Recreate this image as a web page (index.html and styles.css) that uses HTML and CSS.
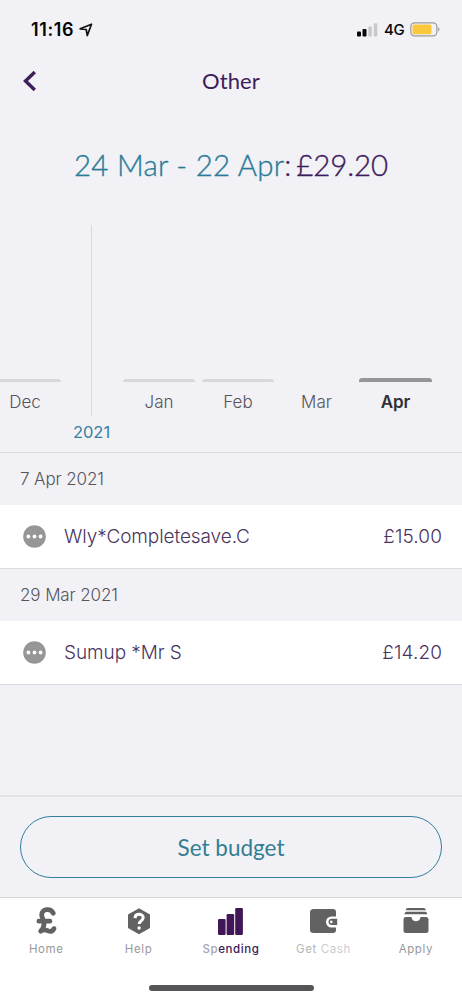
FILE: index.html
```html
<!DOCTYPE html>
<html lang="en">
<head>
<meta charset="utf-8">
<meta name="viewport" content="width=device-width, initial-scale=1">
<title>Other</title>
<link rel="stylesheet" href="styles.css">
</head>
<body>
<div class="app">
  <div class="status">
    <span class="clock">11:16</span>
    <svg class="locate" width="14" height="14" viewBox="0 0 14 14"><path d="M1.200 5.800 12.500 1.200 8.300 12.500 7.200 6.500z"/></svg>
    <svg class="signal" width="21" height="14" viewBox="0 0 21 14"><rect x="0" y="8.500" width="4" height="5" rx="1"/><rect x="5.500" y="6" width="4" height="7.500" rx="1"/><rect class="off" x="11.300" y="3.500" width="3.500" height="10" rx="1"/><rect class="off" x="16.800" y="0.300" width="3.500" height="13.200" rx="1"/></svg>
    <span class="network">4G</span>
    <svg class="battery" width="31" height="15" viewBox="0 0 31 15"><rect class="shell" x=".8" y=".8" width="26" height="13" rx="3.600"/><rect class="charge" x="2.500" y="2.400" width="19" height="9.800" rx="1.800"/><path class="tip" d="M28.200 5v4.600q2.600-2.300 0-4.600z"/></svg>
  </div>
  <header class="nav">
    <svg class="back" width="14" height="20" viewBox="0 0 14 20"><path d="M11.800 1 2.500 10l9.300 9"/></svg>
    <h1 class="title">Other</h1>
  </header>
  <h2 class="summary"><span class="period">24 Mar - 22 Apr</span><span class="total">: <span class="amount">£29.20</span></span></h2>
  <section class="chart">
    <div class="month dec"><i class="bar"></i><span>Dec</span></div>
    <div class="year"><i class="rule"></i><span>2021</span></div>
    <div class="month"><i class="bar"></i><span>Jan</span></div>
    <div class="month"><i class="bar"></i><span>Feb</span></div>
    <div class="month"><i class="bar none"></i><span>Mar</span></div>
    <div class="month current"><i class="bar"></i><span>Apr</span></div>
  </section>
  <main class="list">
    <h3 class="date">7 Apr 2021</h3>
    <div class="row">
      <svg class="dots" width="24" height="24" viewBox="0 0 24 24"><circle cx="12.500" cy="11.500" r="11.300"/><g><circle cx="6.400" cy="11.500" r="1.900"/><circle cx="12.500" cy="11.500" r="1.900"/><circle cx="18.600" cy="11.500" r="1.900"/></g></svg>
      <span class="payee">Wly*Completesave.C</span><span class="price">£15.00</span>
    </div>
    <h3 class="date">29 Mar 2021</h3>
    <div class="row">
      <svg class="dots" width="24" height="24" viewBox="0 0 24 24"><circle cx="12.500" cy="11.500" r="11.300"/><g><circle cx="6.400" cy="11.500" r="1.900"/><circle cx="12.500" cy="11.500" r="1.900"/><circle cx="18.600" cy="11.500" r="1.900"/></g></svg>
      <span class="payee">Sumup *Mr S</span><span class="price">£14.20</span>
    </div>
  </main>
  <div class="action"><button class="budget">Set budget</button></div>
  <nav class="tabs">
    <div class="tab"><svg width="34" height="34" viewBox="0 0 34 34"><path class="pound" d="M24.200 9.200C22 3.800 12.500 4.500 12.700 11c.1 3 2.300 5 2.300 9 0 3-1.400 5.200-3.300 7.200 3.200-2.700 5.400-1.200 7.800-.2 2.600.9 4.600-.2 5.400-2.400M9.900 17.200h11"/></svg><span>Home</span></div>
    <div class="tab"><svg width="34" height="34" viewBox="0 0 34 34"><path class="hex" d="M17 4.300 28 10.500v13.500l-11 6.200-11-6.200V10.500z"/><path class="ask" d="M13 14.100c.1-5.100 8.200-4.900 8.200-.5 0 3.300-4 3.200-4 6.300"/><circle class="askdot" cx="17.100" cy="24" r="1.700"/></svg><span>Help</span></div>
    <div class="tab active"><svg width="34" height="34" viewBox="0 0 34 34"><rect x="4" y="15" width="7.600" height="16" rx="1.200"/><rect x="12.600" y="10" width="7.600" height="21" rx="1.200"/><rect x="21.200" y="4" width="7.700" height="27" rx="1.200"/></svg><span><i class="faded">Sp</i>ending</span></div>
    <div class="tab cash"><svg width="34" height="34" viewBox="0 0 34 34"><path d="M7.500 5H27Q30 5 30 8v4.500h-4.500a5.500 5.500 0 0 0 0 11H30V26Q30 29 27 29H7.500Q4 29 4 26V8.500Q4 5 7.500 5z"/><path d="M25.700 14.700H31.200v6.300h-5.500a3.150 3.150 0 0 1 0-6.300z"/><circle class="clasp" cx="25.300" cy="17.900" r="1.300"/></svg><span>Get <i>Cash</i></span></div>
    <div class="tab apply"><svg width="34" height="34" viewBox="0 0 34 34"><path d="M9 4h15.500q2 0 2.500 2.200H6.600Q7 4 9 4zM7.300 7.800h19.200q1.400 0 1.800 2.500h-23q.5-2.500 2-2.500zM7 13h5.500c.4 5.800 8.600 5.800 9 0H27q2.500 0 2.500 2.500v11Q29.500 29 27 29H7q-2.500 0-2.500-2.500v-11Q4.500 13 7 13z"/></svg><span>Apply</span></div>
  </nav>
  <div class="home"><i></i></div>
</div>
</body>
</html>
```
FILE: styles.css
```css
* { box-sizing: border-box; }
body { margin: 0; background: #f1f1f6; font-family: Inter, "Liberation Sans", sans-serif; color: #56555b; }
h1, h2, h3 { margin: 0; font-weight: 400; }
i { font-style: normal; }
svg { display: block; flex: none; }
.app { width: 462px; height: 1000px; display: flex; flex-direction: column; overflow: hidden; }
.app > * { flex: none; }

.status { height: 57px; padding: 2px 21px 0 31px; display: flex; align-items: center; color: #050507; }
.clock { width: 48px; font-size: 18px; font-weight: 600; letter-spacing: .6px; white-space: nowrap; }
.locate { fill: none; stroke: #111; stroke-width: 1.7; stroke-linejoin: round; }
.signal { margin-left: auto; margin-right: 6px; fill: #080808; }
.signal .off { fill: #c9c9cc; }
.network { width: 26px; font-size: 15px; font-weight: 500; letter-spacing: -.3px; }
.battery .shell { fill: none; stroke: #9c9ca0; stroke-width: 1.2; }
.battery .charge { fill: #fac83a; }
.battery .tip { fill: #8e8e92; }

.nav { height: 49px; padding-bottom: 2px; display: grid; grid-template-columns: 60px 1fr 60px; align-items: center; }
.back { margin-left: 23px; fill: none; stroke: #3d2059; stroke-width: 3.4; }
.title { text-align: center; font: 400 22px Lato, sans-serif; letter-spacing: .1px; color: #3d2059; }

.summary { height: 119px; padding-top: 41px; text-align: center; font: 300 29.5px/36px Lato, sans-serif; color: #2b7b98; white-space: nowrap; -webkit-text-stroke: .35px; }
.period { letter-spacing: .25px; }
.total { color: #3d1c5c; letter-spacing: -.1px; word-spacing: -3px; }

.chart { height: 228px; border-bottom: 1px solid #d9d9de; display: grid; grid-template-columns: 62px 61px 79px 78.5px 78.5px 73px; font-size: 17px; }
.month { width: 72px; padding-top: 153px; display: flex; flex-direction: column; align-items: center; line-height: 22px; font-weight: 300; }
.month.dec { margin-left: -11px; }
.bar { width: 100%; height: 3px; margin: 1px 0 9px; border-radius: 3px 3px 0 0; background: #d7d7dc; }
.bar.none { background: none; }
.current { width: 73px; color: #302f36; font-weight: 600; font-size: 17px; }
.current .bar { height: 4px; margin-top: 0; background: #969698; }
.year { padding-right: 2px; display: flex; flex-direction: column; align-items: center; color: #37819d; line-height: 22px; font-size: 16.5px; }
.rule { width: 1px; height: 191px; margin-bottom: 5px; background: #d9d9df; }

.date { height: 52px; line-height: 53px; padding-left: 20px; font-size: 17px; font-weight: 300; letter-spacing: -.1px; color: #56555b; }
.row { height: 64px; padding: 0 20px 0 22px; display: flex; align-items: center; background: #fff; border-bottom: 1px solid #d9d9de; font-size: 19px; font-weight: 300; color: #49355f; }
.dots { margin-right: 18px; fill: #969696; }
.dots g { fill: #fff; }
.payee { letter-spacing: -.08px; }
.price { margin-left: auto; letter-spacing: .1px; }

.action { height: 102px; margin-top: auto; padding: 20px; border-top: 2px solid #e3e3e7; }
.budget { display: block; width: 422px; height: 62px; margin-top: -1px; border: 1.5px solid #347e99; border-radius: 31px; background: transparent; color: #347e93; font: 400 22.5px Lato, sans-serif; }

.tabs { height: 71px; padding-top: 6px; border-top: 1px solid #d5d5d9; background: #fff; display: grid; grid-template-columns: repeat(5, 1fr); }
.tab { display: flex; flex-direction: column; align-items: center; font-size: 11.5px; line-height: 16px; letter-spacing: .6px; color: #99999a; fill: #626263; }
.tab span { margin-top: 3px; }
.pound { fill: none; stroke: #626263; stroke-width: 4.8; stroke-linecap: round; stroke-linejoin: round; }
.ask { fill: none; stroke: #fff; stroke-width: 3; }
.askdot, .clasp { fill: #fff; }
.active { color: #38205a; fill: #421758; font-weight: 500; }
.faded { color: #aaa3b5; }
.cash { color: #b6b6b8; }
.cash i { color: #cbcbce; }
.home { height: 32px; padding-top: 17px; background: #fff; display: flex; justify-content: center; }
.home i { width: 165px; height: 6px; border-radius: 3px; background: #555456; }
```
